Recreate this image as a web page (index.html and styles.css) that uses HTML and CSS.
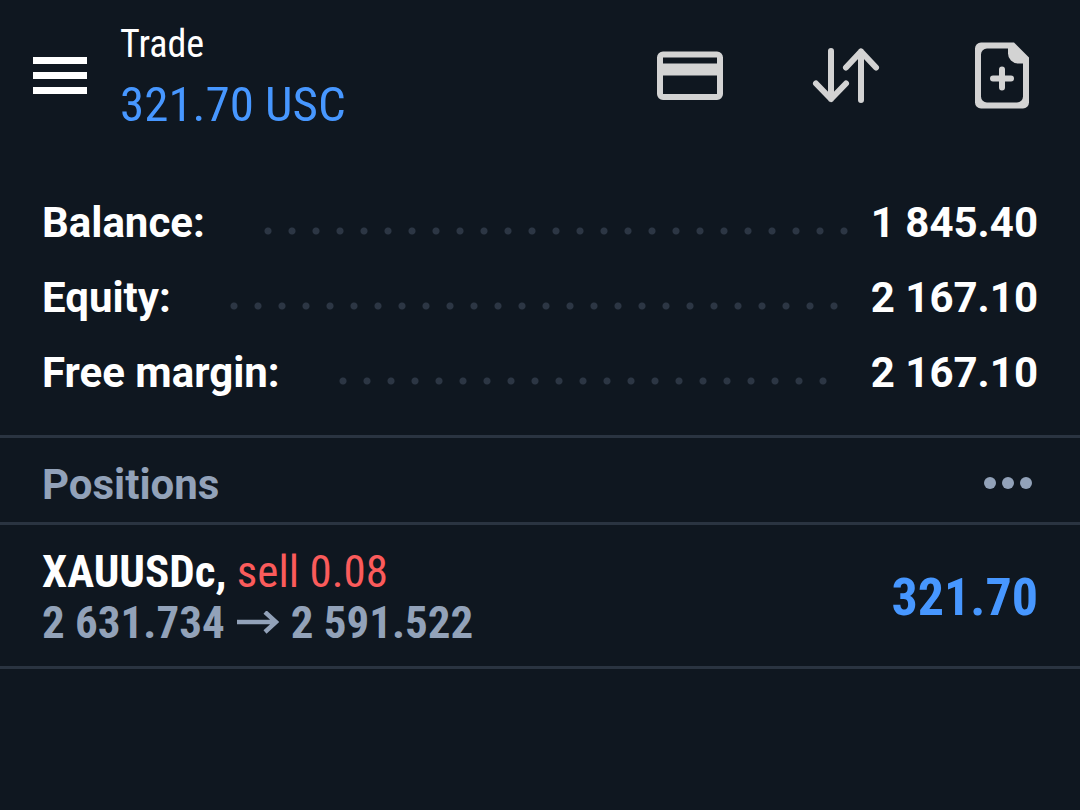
FILE: index.html
```html
<!DOCTYPE html>
<html lang="en">
<head>
  <meta charset="UTF-8">
  <meta name="viewport" content="width=device-width, initial-scale=1.0">
  <title>Trade</title>
  <link rel="stylesheet" href="styles.css">
</head>
<body>
  <header class="topbar">
    <button class="icon-btn" type="button" aria-label="Menu">
      <svg width="54" height="38" viewBox="0 0 54 38" fill="#fff">
        <rect y="1" width="54" height="7"/>
        <rect y="16" width="54" height="7"/>
        <rect y="31" width="54" height="7"/>
      </svg>
    </button>
    <div class="heading">
      <h1>Trade</h1>
      <p class="profit">321.70 USC</p>
    </div>
    <nav class="actions">
      <button class="icon-btn" type="button" aria-label="Deposit">
        <svg width="72" height="72" viewBox="0 0 72 72">
          <rect x="6" y="15.5" width="60" height="42.5" rx="3" fill="none" stroke="currentColor" stroke-width="6"/>
          <rect x="6" y="24.5" width="60" height="12" fill="currentColor"/>
        </svg>
      </button>
      <button class="icon-btn" type="button" aria-label="Sort">
        <svg width="72" height="72" viewBox="0 0 72 72" fill="none" stroke="currentColor" stroke-width="6" stroke-linecap="round" stroke-linejoin="round">
          <path d="M21 12v48M6 44.5l15 15.5 15-15.5"/>
          <path d="M51 61V12.5M36 28.5l15-16 15 16"/>
        </svg>
      </button>
      <button class="icon-btn" type="button" aria-label="New order">
        <svg width="72" height="72" viewBox="0 0 72 72">
          <path fill="currentColor" fill-rule="evenodd" d="M15 3.5h33L63 18.5V63.5a6 6 0 0 1-6 6H15a6 6 0 0 1-6-6V9.5a6 6 0 0 1 6-6zM42 9.5H21a6 6 0 0 0-6 6v42a6 6 0 0 0 6 6h30a6 6 0 0 0 6-6V24.5h-5a10 10 0 0 1-10-10z"/>
          <path d="M36 30.5v18M27 39.5h18" stroke="currentColor" stroke-width="6" stroke-linecap="round"/>
        </svg>
      </button>
    </nav>
  </header>

  <main>
    <dl class="summary">
      <div class="summary-row">
        <dt>Balance:</dt>
        <dd><span class="dots"></span>1 845.40</dd>
      </div>
      <div class="summary-row">
        <dt>Equity:</dt>
        <dd><span class="dots"></span>2 167.10</dd>
      </div>
      <div class="summary-row">
        <dt>Free margin:</dt>
        <dd><span class="dots"></span>2 167.10</dd>
      </div>
    </dl>

    <section>
      <div class="section-head">
        <h2>Positions</h2>
        <button class="icon-btn more" type="button" aria-label="Position options">
          <svg width="60" height="24" viewBox="0 0 60 24" fill="currentColor">
            <circle cx="12" cy="10" r="6"/>
            <circle cx="30" cy="10" r="6"/>
            <circle cx="48" cy="10" r="6"/>
          </svg>
        </button>
      </div>

      <div class="position">
        <div class="details">
          <p class="symbol">XAUUSDc, <span class="sell">sell 0.08</span></p>
          <p class="prices">
            <span>2 631.734</span>
            <svg width="42" height="24" viewBox="0 0 42 24" fill="none" stroke="currentColor" stroke-width="4.5" role="img" aria-label="to">
              <path d="M0 11h39M28 1l11 10-11 10"/>
            </svg>
            <span>2 591.522</span>
          </p>
        </div>
        <p class="result">321.70</p>
      </div>
    </section>
  </main>
</body>
</html>
```
FILE: styles.css
```css
* {
  margin: 0;
  padding: 0;
  box-sizing: border-box;
}
body {
  background: #0f1720;
  color: #fff;
  font-family: Roboto, "Liberation Sans", sans-serif;
}
svg {
  display: block;
  flex-shrink: 0;
}
.icon-btn {
  background: none;
  border: none;
  color: #d3d3d3;
  cursor: pointer;
}
.topbar {
  display: flex;
  align-items: center;
  gap: 33px;
  padding: 14px 42px 14px 33px;
}
.heading,
.position {
  font-family: "Roboto Condensed", "Liberation Sans Narrow", Roboto, sans-serif;
}
.heading h1 {
  font-size: 38px;
  font-weight: 400;
  line-height: 60px;
}
.profit {
  color: #4797ff;
  font-size: 49px;
  line-height: 62px;
}
.actions {
  display: flex;
  gap: 84px;
  margin-left: auto;
}
.summary {
  padding: 35px 42px 25px;
  font-size: 42px;
  font-weight: 700;
  line-height: 75px;
}
.summary-row,
.summary-row dd {
  display: flex;
  align-items: center;
}
.summary-row dd {
  flex: 1;
  justify-content: flex-end;
}
/* only whole dots are drawn, 24px apart */
.dots {
  flex: 1;
  height: 8px;
  margin: 16px 21px 0 59px;
}
.dots::before {
  content: "";
  display: block;
  width: round(down, 100% + 16px, 24px);
  height: 8px;
  background: radial-gradient(circle at 4px 4px, #2c3644 3px, transparent 4px) 0 0 / 24px 8px;
}
.section-head {
  display: flex;
  align-items: center;
  justify-content: space-between;
  padding: 9px 42px 0;
  border-top: 3px solid #2a3441;
  color: #92a2b9;
}
.section-head h2 {
  font-size: 42px;
  font-weight: 700;
  line-height: 75px;
}
.more {
  color: #92a2b9;
}
.position {
  display: flex;
  align-items: center;
  justify-content: space-between;
  padding: 21px 42px 18px;
  border-top: 3px solid #2a3441;
  border-bottom: 3px solid #2a3441;
  font-size: 45px;
  font-weight: 700;
  line-height: 51px;
}
.sell {
  color: #fb5b5b;
  font-weight: 400;
}
.prices {
  display: flex;
  align-items: center;
  gap: 12px;
  color: #92a2b9;
}
.result {
  color: #4797ff;
  font-size: 52px;
}
```
